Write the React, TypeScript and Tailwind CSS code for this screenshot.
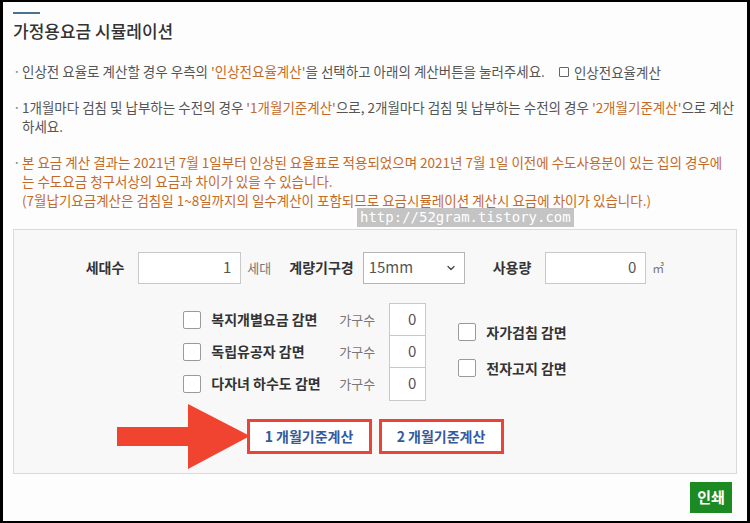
import { ChevronDown } from 'lucide-react'

const orange = 'text-[#c46a28]'

function Bullet({ children, className = '' }: { children: React.ReactNode; className?: string }) {
  return (
    <div className={`flex text-[13.5px] leading-[19px] ${className}`}>
      <span className="w-[9px] shrink-0 text-[#6a8aa8]">·</span>
      <div>{children}</div>
    </div>
  )
}

function Box({ value, className = '' }: { value: string; className?: string }) {
  return (
    <div className={`flex items-center justify-end border border-[#c9c9c9] bg-white pr-[9px] text-[15px] text-[#555] ${className}`}>
      {value}
    </div>
  )
}

function Check({ label }: { label: string }) {
  return (
    <div className="flex items-center gap-[10px]">
      <span className="h-[18px] w-[18px] rounded-[2px] border border-[#9a9a9a] bg-white" />
      <span className="text-[14px] font-bold text-[#333]">{label}</span>
    </div>
  )
}

const reductions = ['복지개별요금 감면', '독립유공자 감면', '다자녀 하수도 감면']

export default function App() {
  return (
    <div className="h-[523px] w-[750px] border-x-[3px] border-y-2 border-black bg-[#fdfdfd] font-['Noto_Sans_CJK_KR','Noto_Sans',sans-serif] text-[#555]">
      <div className="relative px-[10px] pt-[10px]">
        <div className="h-[2px] w-[27px] bg-[#4d7191]" />
        <h1 className="mt-[5px] text-[17px] leading-[24px] font-medium text-[#333]">가정용요금 시뮬레이션</h1>

        <Bullet className="mt-[19px]">
          인상전 요율로 계산할 경우 우측의 <span className={orange}>'인상전요율계산'</span>을 선택하고 아래의 계산버튼을 눌러주세요.
          <span className="ml-[14px] inline-flex items-center gap-[5px]">
            <span className="inline-block h-[10px] w-[10px] rounded-[1px] border border-[#666]" />
            인상전요율계산
          </span>
        </Bullet>

        <Bullet className="mt-[16px] pr-[2px]">
          1개월마다 검침 및 납부하는 수전의 경우 <span className={orange}>'1개월기준계산'</span>으로, 2개월마다 검침 및 납부하는 수전의 경우{' '}
          <span className={orange}>'2개월기준계산'</span>으로 계산하세요.
        </Bullet>

        <Bullet className={`mt-[17px] pr-[12px] ${orange}`}>
          본 요금 계산 결과는 2021년 7월 1일부터 인상된 요율표로 적용되었으며 2021년 7월 1일 이전에 수도사용분이 있는 집의 경우에는 수도요금 청구서상의 요금과 차이가 있을 수 있습니다.
          <br />
          (7월납기요금계산은 검침일 1~8일까지의 일수계산이 포함되므로 요금시뮬레이션 계산시 요금에 차이가 있습니다.)
        </Bullet>

        <span className="absolute left-[354px] top-[206px] bg-[#c4c4c4] px-[3px] font-['DejaVu_Sans_Mono',monospace] text-[14px] leading-[19px] text-white">
          http://52gram.tistory.com
        </span>

        <div className="mt-[19px] flex h-[245px] flex-col items-center border border-[#dadada] bg-[#f8f8f8] pt-[22px]">
          <div className="flex items-center text-[14px]">
            <span className="mr-[14px] font-bold text-[#333]">세대수</span>
            <Box value="1" className="h-[32px] w-[103px]" />
            <span className="ml-[6px] mr-[18px] text-[13px] text-[#777]">세대</span>
            <span className="mr-[9px] font-bold text-[#333]">계량기구경</span>
            <div className="flex h-[32px] w-[102px] items-center justify-between border border-[#b5b5b5] bg-white pl-[5px] pr-[7px] text-[15px] text-[#555]">
              15mm
              <ChevronDown className="h-[12px] w-[12px] text-[#444]" strokeWidth={2.5} />
            </div>
            <span className="ml-[28px] mr-[14px] font-bold text-[#333]">사용량</span>
            <Box value="0" className="h-[32px] w-[101px]" />
            <span className="ml-[6px] text-[12px] text-[#777]">㎥</span>
          </div>

          <div className="mt-[19px] flex items-center gap-[32px]">
            <div className="flex flex-col">
              {reductions.map((label, i) => (
                <div key={label} className={`flex items-center ${i > 0 ? '-mt-[2px]' : ''}`}>
                  <div className="w-[156px]">
                    <Check label={label} />
                  </div>
                  <span className="w-[50px] text-[13px] text-[#777]">가구수</span>
                  <Box value="0" className="h-[34px] w-[37px]" />
                </div>
              ))}
            </div>
            <div className="flex flex-col gap-[15px] pb-[3px]">
              <Check label="자가검침 감면" />
              <Check label="전자고지 감면" />
            </div>
          </div>

          <div className="relative mt-[18px] flex gap-[7px]">
            <svg className="absolute -left-[130px] -top-[15px]" width="134" height="66" viewBox="0 0 134 66">
              <path d="M0 23 H71 V0 L133 32 L71 65 V42 H0 Z" fill="#f04430" />
            </svg>
            {['1 개월기준계산', '2 개월기준계산'].map(t => (
              <button key={t} className="flex h-[35px] w-[125px] items-center justify-center border-[3px] border-[#ea4436] bg-white text-[14px] font-bold text-[#355a9c]">
                {t}
              </button>
            ))}
          </div>
        </div>

        <div className="mt-[8px] flex justify-end pr-[5px]">
          <button className="h-[31px] w-[42px] bg-[#1c8a23] text-[15px] font-bold text-white">인쇄</button>
        </div>
      </div>
    </div>
  )
}
